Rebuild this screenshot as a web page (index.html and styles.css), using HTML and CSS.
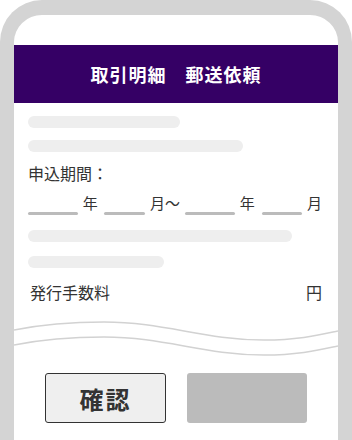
FILE: index.html
```html
<!DOCTYPE html>
<html>
	<head>
		<meta charset="UTF-8">
		<title>取引明細 郵送依頼</title>
		<link rel="stylesheet" href="styles.css">
	</head>
	<body>
		<div class="phone">
			<div class="head">取引明細　郵送依頼</div>
			<div class="main">
				<p class="bar w1"></p>
				<p class="bar w2"></p>
				<div class="label">申込期間：</div>
				<div class="date">
					<span class="line l1"></span><span>年</span>
					<span class="line l2"></span><span>月〜</span>
					<span class="line l3"></span><span>年</span>
					<span class="line l4"></span><span>月</span>
				</div>
				<p class="bar w3"></p>
				<p class="bar w4"></p>
				<div class="fee">
					<span>発行手数料</span>
					<span>円</span>
				</div>
			</div>
			<svg class="wave" width="324" height="44" viewBox="0 0 324 44">
				<path d="M0 13 C30 7 60 5 90 5 C150 5 190 23 250 23 C285 23 305 18 324 14" fill="none" stroke="#d2d2d2" stroke-width="1.5"/>
				<path d="M0 28 C30 22 60 20 90 20 C150 20 190 38 250 38 C285 38 305 33 324 29" fill="none" stroke="#d2d2d2" stroke-width="1.5"/>
			</svg>
			<div class="btns">
				<div class="btn ok">確認</div>
				<div class="btn off"></div>
			</div>
		</div>
	</body>
</html>
```
FILE: styles.css
```css
*{
	margin: 0;
	padding: 0;
	box-sizing: border-box;
}
body{
	background: #fff;
	font-family: "Noto Sans CJK JP", "Noto Sans", sans-serif;
	color: #333;
}
.phone{
	width: 352px;
	height: 440px;
	border: 14px solid #d4d4d4;
	border-top-width: 15px;
	border-bottom: 0;
	border-radius: 42px 42px 0 0;
	padding-top: 30px;
	overflow: hidden;
}
.head{
	height: 58px;
	background: #350065;
	color: #fff;
	font-size: 18px;
	font-weight: bold;
	letter-spacing: 1px;
	display: flex;
	align-items: center;
	justify-content: center;
}
.main{
	padding: 13px 16px 0 14px;
}
.bar{
	height: 12px;
	border-radius: 6px;
	background: #eee;
}
.w1{
	width: 152px;
}
.w2{
	width: 215px;
	margin-top: 12px;
}
.w3{
	width: 264px;
	margin-top: 17px;
}
.w4{
	width: 136px;
	margin-top: 14px;
}
.label{
	font-size: 16px;
	line-height: 24px;
	margin-top: 9px;
}
.date{
	display: flex;
	align-items: flex-end;
	font-size: 15px;
	line-height: 20px;
	margin-top: 8px;
	gap: 5px;
}
.line{
	height: 3px;
	border-radius: 2px;
	background: #bbb;
	margin-bottom: -2px;
}
.l1{ width: 52px; }
.l2{ width: 43px; margin-left: 1px; }
.l3{ width: 52px; }
.l4{ width: 42px; margin-left: 2px; }
.fee{
	display: flex;
	justify-content: space-between;
	font-size: 16px;
	line-height: 24px;
	margin-top: 12px;
	padding-left: 2px;
}
.wave{
	display: block;
	margin-top: 13px;
}
.btns{
	display: flex;
	justify-content: center;
	gap: 21px;
	margin-top: 12px;
}
.btn{
	width: 121px;
	height: 50px;
	border-radius: 3px;
}
.ok{
	background: #efefef;
	border: 1px solid #333;
	font-size: 24px;
	font-weight: bold;
	letter-spacing: 2px;
	display: flex;
	align-items: center;
	justify-content: center;
}
.off{
	width: 120px;
	background: #bbb;
}
```
